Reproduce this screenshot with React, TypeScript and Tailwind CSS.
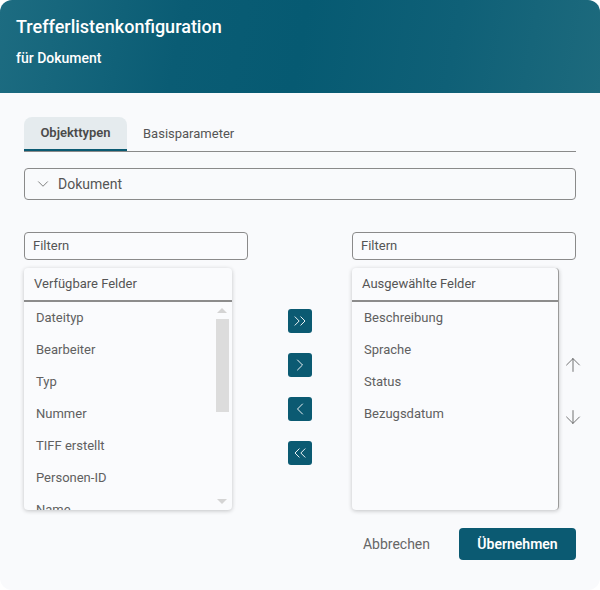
import { ChevronDown, ChevronRight, ChevronLeft, ChevronsRight, ChevronsLeft, ArrowUp, ArrowDown } from "lucide-react";

const availableFields = ["Dateityp", "Bearbeiter", "Typ", "Nummer", "TIFF erstellt", "Personen-ID", "Name"];
const selectedFields = ["Beschreibung", "Sprache", "Status", "Bezugsdatum"];

const FilterInput = () => (
  <div className="h-[28px] border border-[#8a8a8a] rounded-[4px] flex items-center px-2 text-[13px] text-[#555] bg-[#fafbfd]">
    Filtern
  </div>
);

const MoveButton = ({ children }: { children: any }) => (
  <div className="w-6 h-6 rounded-[3px] bg-[#0b5a72] flex items-center justify-center text-white">
    {children}
  </div>
);

const FieldList = ({ title, items, scroll }: { title: string; items: string[]; scroll?: boolean }) => (
  <div
    className={`h-[242px] rounded-[4px] bg-[#fafbfd] shadow-[0_1px_4px_rgba(0,0,0,0.22)] flex flex-col overflow-hidden ${
      scroll ? "" : "border-r border-[#9a9a9a]"
    }`}
  >
    <div className="h-8 flex items-center pl-[10px] text-[13px] text-[#555] shrink-0">{title}</div>
    <div className="h-[2px] bg-[#8c8c8c] shrink-0" />
    <div className="flex flex-1 min-h-0">
      <div className="flex-1 overflow-hidden">
        {items.map((item) => (
          <div key={item} className="h-8 flex items-center pl-3 text-[13px] text-[#606060]">
            {item}
          </div>
        ))}
      </div>
      {scroll && (
        <div className="w-[17px] flex flex-col items-center pr-[3px] pt-[6px] pb-[6px]">
          <div className="w-0 h-0 border-l-[5px] border-r-[5px] border-b-[5px] border-l-transparent border-r-transparent border-b-[#d4d4d4]" />
          <div className="w-[13px] h-[93px] bg-[#dcdcdc] mt-[6px]" />
          <div className="flex-1" />
          <div className="w-0 h-0 border-l-[5px] border-r-[5px] border-t-[5px] border-l-transparent border-r-transparent border-t-[#d4d4d4]" />
        </div>
      )}
    </div>
  </div>
);

export default function App() {
  return (
    <div className="w-[600px] h-[590px] bg-white" style={{ fontFamily: "Roboto, 'Noto Sans', sans-serif" }}>
      <div className="w-full h-full rounded-[12px] overflow-hidden bg-[#f9fafc] flex flex-col">
        <div className="h-[93px] shrink-0 px-4 pt-[14px] text-white bg-[linear-gradient(100deg,#1d6c81_0%,#0a5c74_30%,#065a72_50%,#0f6077_75%,#1d6a7d_100%)]">
          <div className="text-[18px] leading-[26px] font-medium">Trefferlistenkonfiguration</div>
          <div className="text-[14px] leading-[20px] font-medium mt-2">für Dokument</div>
        </div>

        <div className="flex-1 px-6 pt-6 flex flex-col">
          <div className="h-[35px] border-b border-[#8a8a8a] flex items-end">
            <div className="h-[34px] w-[103px] rounded-t-lg bg-[#e5ebee] border-b-2 border-[#0b5a72] flex items-center justify-center text-[13px] font-semibold text-[#4a4a4a]">
              Objekttypen
            </div>
            <div className="h-[34px] px-4 flex items-center text-[13px] text-[#555]">Basisparameter</div>
          </div>

          <div className="mt-4 h-8 border border-[#8a8a8a] rounded-[4px] flex items-center pl-[9px] gap-[6px] text-[14px] text-[#555]">
            <ChevronDown className="w-[18px] h-[18px] shrink-0 text-[#777]" strokeWidth={1.25} />
            Dokument
          </div>

          <div className="mt-8 grid grid-cols-[224px_104px_207px_17px] gap-y-2">
            <FilterInput />
            <div />
            <div className="col-span-2">
              <FilterInput />
            </div>

            <div className="w-[208px]">
              <FieldList title="Verfügbare Felder" items={availableFields} scroll />
            </div>
            <div className="flex flex-col items-center pt-[41px] gap-5">
              <MoveButton>
                <ChevronsRight className="w-5 h-5 shrink-0" strokeWidth={1.1} />
              </MoveButton>
              <MoveButton>
                <ChevronRight className="w-5 h-5 shrink-0" strokeWidth={1.1} />
              </MoveButton>
              <MoveButton>
                <ChevronLeft className="w-5 h-5 shrink-0" strokeWidth={1.1} />
              </MoveButton>
              <MoveButton>
                <ChevronsLeft className="w-5 h-5 shrink-0" strokeWidth={1.1} />
              </MoveButton>
            </div>
            <FieldList title="Ausgewählte Felder" items={selectedFields} />
            <div className="flex flex-col items-end pt-[86px] gap-[30px] text-[#555]">
              <ArrowUp className="w-[22px] h-[22px] shrink-0 -mr-[8px]" strokeWidth={0.9} />
              <ArrowDown className="w-[22px] h-[22px] shrink-0 -mr-[8px]" strokeWidth={0.9} />
            </div>
          </div>

          <div className="mt-[18px] flex justify-end items-center gap-[15px]">
            <div className="px-[14px] h-8 flex items-center text-[14px] text-[#666]">Abbrechen</div>
            <div className="h-8 w-[117px] rounded-[4px] bg-[#0b5a72] flex items-center justify-center text-white text-[14px] font-semibold">
              Übernehmen
            </div>
          </div>
        </div>
      </div>
    </div>
  );
}
